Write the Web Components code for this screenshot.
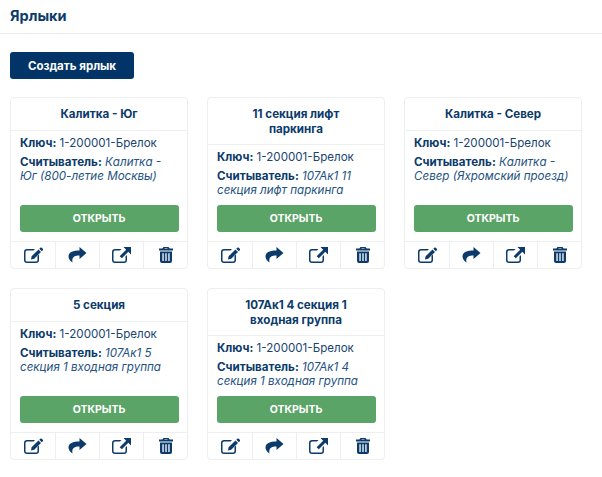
<!DOCTYPE html>
<html lang="ru">
<head>
<meta charset="utf-8">
<title>Ярлыки</title>
<style>
    html, body { margin: 0; padding: 0; background: #fff; }
    body { font-family: Inter, "Noto Sans", sans-serif; color: #0b3a6b; }
</style>
</head>
<body>
<shortcuts-page>
    <shortcut-card title="Калитка - Юг" reader="Калитка - Юг (800-летие Москвы)"></shortcut-card>
    <shortcut-card title="11 секция лифт паркинга" reader="107Ак1 11 секция лифт паркинга"></shortcut-card>
    <shortcut-card title="Калитка - Север" reader="Калитка - Север (Яхромский проезд)"></shortcut-card>
    <shortcut-card title="5 секция" reader="107Ак1 5 секция 1 входная группа"></shortcut-card>
    <shortcut-card title="107Ак1 4 секция 1 входная группа" reader="107Ак1 4 секция 1 входная группа"></shortcut-card>
</shortcuts-page>

<script>
class ShortcutsPage extends HTMLElement {
    constructor() {
        super();
        this.attachShadow({ mode: 'open' });
        this.shadowRoot.innerHTML = `
            <style>
                :host { display: block; width: 602px; height: 477px; overflow: hidden; box-sizing: border-box; }
                header {
                    height: 34px;
                    box-sizing: border-box;
                    padding: 7px 10px 0;
                    border-bottom: 1px solid #e9ebee;
                    font-size: 14.5px;
                    line-height: 18px;
                    font-weight: 700;
                    color: #0b3a6b;
                }
                .content { padding: 18px 10px 0; }
                button {
                    display: block;
                    width: 124px;
                    height: 27px;
                    padding: 0;
                    border: 0;
                    border-radius: 3px;
                    background: #023468;
                    color: #fff;
                    font: 700 11.5px Inter, sans-serif;
                }
                .grid {
                    display: grid;
                    grid-template-columns: repeat(3, 178px);
                    column-gap: 19px;
                    row-gap: 19px;
                    margin-top: 18px;
                }
            </style>
            <header>Ярлыки</header>
            <div class="content">
                <button type="button">Создать ярлык</button>
                <div class="grid"><slot></slot></div>
            </div>
        `;
    }
}

class ShortcutCard extends HTMLElement {
    constructor() {
        super();
        this.attachShadow({ mode: 'open' });
    }

    connectedCallback() {
        const title = this.getAttribute('title');
        const reader = this.getAttribute('reader');
        this.shadowRoot.innerHTML = `
            <style>
                :host {
                    display: flex;
                    flex-direction: column;
                    height: 172px;
                    box-sizing: border-box;
                    border: 1px solid #eceef0;
                    border-radius: 4px;
                    background: #fff;
                    overflow: hidden;
                    font-size: 11.6px;
                    color: #0b3a6b;
                }
                .title {
                    padding: 9px 30px 8px;
                    border-bottom: 1px solid #eceef0;
                    text-align: center;
                    font-weight: 700;
                    line-height: 14.5px;
                }
                .body {
                    flex: 1;
                    display: flex;
                    flex-direction: column;
                    padding: 5px 8.5px 9px;
                }
                .line { line-height: 14px; margin-bottom: 5px; color: #1a4570; padding-left: .5px; }
                b { font-weight: 700; color: #0b3a6b; }
                i { color: #24527f; }
                .open {
                    margin-top: auto;
                    flex: none;
                    height: 27px;
                    border: 0;
                    padding: 0;
                    border-radius: 3px;
                    background: #5ba467;
                    color: #fff;
                    font: 700 10.5px Inter, sans-serif;
                }
                .actions {
                    display: grid;
                    grid-template-columns: repeat(4, 1fr);
                    box-sizing: border-box;
                    height: 27px;
                    border-top: 1px solid #eceef0;
                }
                .actions span {
                    display: flex;
                    align-items: center;
                    justify-content: center;
                    border-left: 1px solid #eceef0;
                }
                .actions span:first-child { border-left: 0; }
                svg { display: block; height: 16px; fill: #0b3a6b; }
                .wide { width: 19px; }
                .trash { width: 14px; }
            </style>
            <div class="title">${title}</div>
            <div class="body">
                <div class="line"><b>Ключ:</b> 1-200001-Брелок</div>
                <div class="line"><b>Считыватель:</b> <i>${reader}</i></div>
                <button class="open" type="button">ОТКРЫТЬ</button>
            </div>
            <div class="actions">
                <span><svg class="wide" viewBox="0 0 19 16"><path d="M3 2h8l-1.500 1.500H3A1.500 1.500 0 0 0 1.500 5v8A1.500 1.500 0 0 0 3 14.500h9a1.500 1.500 0 0 0 1.500-1.500V9L15 7.500V13a3 3 0 0 1-3 3H3a3 3 0 0 1-3-3V5a3 3 0 0 1 3-3z"/><path d="M14.500 2.500l2.500 2.500-6.800 6.800-3.200.6.600-3.100zM15.300 1.700l1-1c.4-.4 1-.4 1.400 0l1.100 1.100c.4.4.4 1 0 1.400l-1 1z"/></svg></span>
                <span><svg class="wide" viewBox="0 0 19 16"><path d="M11.500 0l7 6-7 6V8.500C6.500 8.500 3.500 10 4.500 15.500 2 14 .5 11.500.5 9.500.5 5 5 3.500 11.500 3.400z"/></svg></span>
                <span><svg class="wide" viewBox="0 0 19 16"><path d="M3 2h6.500L8 3.500H3A1.500 1.500 0 0 0 1.500 5v8A1.500 1.500 0 0 0 3 14.500h9a1.500 1.500 0 0 0 1.500-1.500V9.500L15 8v5a3 3 0 0 1-3 3H3a3 3 0 0 1-3-3V5a3 3 0 0 1 3-3z"/><path d="M11.500 0H19v7.500l-2.700-2.700-6.500 6.500-2.100-2.100 6.500-6.500z"/></svg></span>
                <span><svg class="trash" viewBox="0 0 14 16"><path fill-rule="evenodd" d="M4.500 0h5l1.200 1.500H14v2H0v-2h3.300zM5.300 1.500h3.400l-.4-.5H5.700z"/><path fill-rule="evenodd" d="M1 4.500h12V14a2 2 0 0 1-2 2H3a2 2 0 0 1-2-2zM3.400 6.300v7.700h1.300V6.300zM6.350 6.300v7.700h1.300V6.300zM9.300 6.300v7.700h1.300V6.300z"/></svg></span>
            </div>
        `;
    }
}

customElements.define('shortcuts-page', ShortcutsPage);
customElements.define('shortcut-card', ShortcutCard);
</script>
</body>
</html>
